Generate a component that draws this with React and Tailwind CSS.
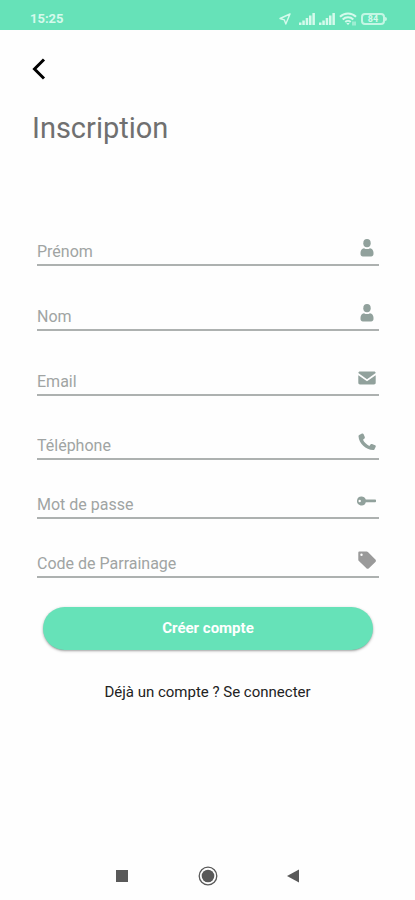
import { useState } from 'react'

const UserIcon = () => (
  <svg viewBox="0 0 20 20" className="size-5" fill="currentColor" aria-hidden="true">
    <ellipse cx="10" cy="5.2" rx="3.7" ry="4.1" />
    <path d="M7 10.2c1.8 1.2 4.2 1.2 6 0 2.200.3 3.500 2.200 3.500 4.600v1.200c0 1.600-1 2.400-2.400 2.400H5.900c-1.400 0-2.400-.8-2.400-2.400v-1.200c0-2.400 1.300-4.300 3.500-4.600z" />
  </svg>
)

const MailIcon = () => (
  <svg viewBox="0 0 20 20" className="size-5" fill="currentColor" aria-hidden="true">
    <path d="M3 3.500h14c1 0 1.700.7 1.700 1.600L10 11.200 1.300 5.100c0-.9.7-1.600 1.700-1.600z" />
    <path d="M1.300 7.200 10 13.200l8.700-6v7.600c0 .9-.7 1.700-1.700 1.700H3c-1 0-1.700-.8-1.700-1.700z" />
  </svg>
)

const PhoneIcon = () => (
  <svg viewBox="0 0 20 20" className="size-5" fill="currentColor" aria-hidden="true">
    <path d="M2.200 3.100 5 1.600c.6-.3 1.200-.1 1.500.5l1.300 3c.2.500.1 1-.3 1.300L6 7.700c1.300 2.700 3.600 4.900 6.400 6.200l1.300-1.600c.3-.4.8-.5 1.300-.3l3.100 1.200c.6.2.9.900.6 1.500l-1.300 2.700c-.2.500-.7.700-1.200.7C8.700 17.600 2 11.400 1.500 4.200c0-.5.2-.9.7-1.100z" />
  </svg>
)

const KeyIcon = () => (
  <svg viewBox="0 0 20 20" className="size-5" fill="currentColor" aria-hidden="true">
    <path
      fillRule="evenodd"
      d="M4.600 5.500c1.900 0 3.500 1.200 4.200 2.900h9.400c.5 0 .8.300.8.700v1.500c0 .4-.3.700-.8.700H8.800a4.500 4.500 0 1 1-4.200-5.800zM2.700 8.800a1.200 1.200 0 1 0 0 2.400 1.200 1.200 0 0 0 0-2.400z"
    />
  </svg>
)

const TagIcon = () => (
  <svg viewBox="0 0 20 20" className="size-5" fill="currentColor" aria-hidden="true">
    <path
      fillRule="evenodd"
      d="M2.400 1.500h7.200c.5 0 1 .2 1.300.5l7.500 7.400c.7.700.7 1.800 0 2.500l-6.500 6.400c-.7.700-1.800.7-2.500 0L1.900 11c-.4-.3-.6-.8-.6-1.300V2.600c0-.6.5-1.100 1.100-1.100zM4.500 3.600a1.200 1.200 0 1 0 0 2.400 1.200 1.200 0 0 0 0-2.400z"
    />
  </svg>
)

const identity = [
  { name: 'prenom', label: 'Prénom', type: 'text', Icon: UserIcon },
  { name: 'nom', label: 'Nom', type: 'text', Icon: UserIcon },
  { name: 'email', label: 'Email', type: 'email', Icon: MailIcon },
]

const account = [
  { name: 'telephone', label: 'Téléphone', type: 'tel', Icon: PhoneIcon },
  { name: 'password', label: 'Mot de passe', type: 'password', Icon: KeyIcon },
  { name: 'code', label: 'Code de Parrainage', type: 'text', Icon: TagIcon, color: 'text-[#9a9a9a]' },
]

function Field({ name, label, type, Icon, color = 'text-[#91a19c]', value, onChange }) {
  return (
    <div className="flex h-9 items-end border-b-2 border-[#adb1b0] pr-0.5">
      <input
        name={name}
        type={type}
        aria-label={label}
        placeholder={label}
        value={value}
        onChange={onChange}
        className="h-6 min-w-0 flex-1 bg-transparent text-base text-gray-800 outline-none placeholder:text-[#a0a4a3]"
      />
      <span className={color + ' pb-1.5'}><Icon /></span>
    </div>
  )
}

function Signal() {
  return (
    <svg viewBox="0 0 16 12" className="h-3 w-4" fill="currentColor" aria-hidden="true">
      <path d="M0 9.500h2.500V12H0zM3.300 7.500h2.500V12H3.300zM6.700 5h2.500v7H6.700zM10 2.500h2.500v9.500H10zM13.400 0h2.500v12h-2.500z" />
    </svg>
  )
}

function StatusBar() {
  return (
    <div className="flex h-[30px] items-center justify-between bg-[#66e2b8] pt-2 pr-7 pl-[30px] text-[#d5faec]">
      <span className="text-[13px] font-bold">15:25</span>
      <div className="flex items-center gap-1">
        <svg viewBox="0 0 12 12" className="mr-1 size-3" fill="none" stroke="currentColor" strokeWidth="1.400" strokeLinejoin="round" aria-hidden="true">
          <path d="M11 1 1 5.500l4.300 1.300L6.800 11z" />
        </svg>
        <Signal />
        <Signal />
        <svg viewBox="0 0 18 14" className="h-3.5 w-[18px]" fill="none" stroke="currentColor" strokeWidth="2" aria-hidden="true">
          <path d="M1 4.800c4.400-4.400 11.600-4.400 16 0M3.700 7.500c3-2.900 7.600-2.900 10.600 0M6.300 10c1.500-1.400 3.900-1.400 5.400 0" />
          <path d="M7.300 11h3.400L9 13.200z" fill="currentColor" stroke="none" />
          <path d="M14 9.500v4M16 9.500v4" strokeWidth="1" />
        </svg>
        <div className="flex items-center">
          <span className="flex h-3 w-6 items-center justify-center rounded-sm border-2 border-[#c4f6e4] text-[9px] leading-none font-bold">84</span>
          <span className="h-1 w-0.5 rounded-r bg-[#c4f6e4]" />
        </div>
      </div>
    </div>
  )
}

function NavBar() {
  return (
    <nav className="mt-auto flex h-12 items-center justify-center gap-[65px] text-[#595959]">
      <button type="button" aria-label="Applications récentes">
        <svg viewBox="0 0 20 20" className="size-5" fill="currentColor"><path d="M3 4h12v12H3z" /></svg>
      </button>
      <button type="button" aria-label="Accueil">
        <svg viewBox="0 0 20 20" className="size-5" fill="currentColor">
          <circle cx="10" cy="10" r="8.800" fill="none" stroke="currentColor" strokeWidth="1.300" />
          <circle cx="10" cy="10" r="6.300" />
        </svg>
      </button>
      <button type="button" aria-label="Retour">
        <svg viewBox="0 0 20 20" className="size-5" fill="currentColor"><path d="M16 3.500v13L4 10z" /></svg>
      </button>
    </nav>
  )
}

export default function App() {
  const [form, setForm] = useState({})

  const onChange = (e) => setForm({ ...form, [e.target.name]: e.target.value })

  const renderField = (field) => (
    <Field key={field.name} {...field} value={form[field.name] || ''} onChange={onChange} />
  )

  return (
    <div className="flex min-h-screen flex-col bg-[#fefefe] font-['Roboto',sans-serif]">
      <StatusBar />
      <main className="flex flex-col pt-7">
        <button type="button" aria-label="Page précédente" className="ml-7 w-5 text-black">
          <svg viewBox="0 0 20 22" className="h-[22px] w-5" fill="none" stroke="currentColor" strokeWidth="3">
            <path d="M16 1.500 6.500 11l9.500 9.500" />
          </svg>
        </button>
        <h1 className="mt-7 ml-8 text-[29px] leading-10 text-[#707070]">Inscription</h1>

        <form onSubmit={(e) => e.preventDefault()} className="mt-[82px] flex flex-col pr-9 pl-[37px]">
          <div className="flex flex-col gap-7">
            <div className="flex flex-col gap-[29px]">{identity.map(renderField)}</div>
            <div className="flex flex-col gap-[23px]">{account.map(renderField)}</div>
          </div>
          <button
            type="submit"
            className="mx-1.5 mt-[29px] h-[43px] rounded-full bg-[#66e2b8] text-[15px] font-bold text-white shadow-sm shadow-black/30"
          >
            Créer compte
          </button>
        </form>

        <a href="#connexion" className="mt-8 self-center text-[15px] leading-5 text-[#222]">
          Déjà un compte ? Se connecter
        </a>
      </main>
      <NavBar />
    </div>
  )
}
